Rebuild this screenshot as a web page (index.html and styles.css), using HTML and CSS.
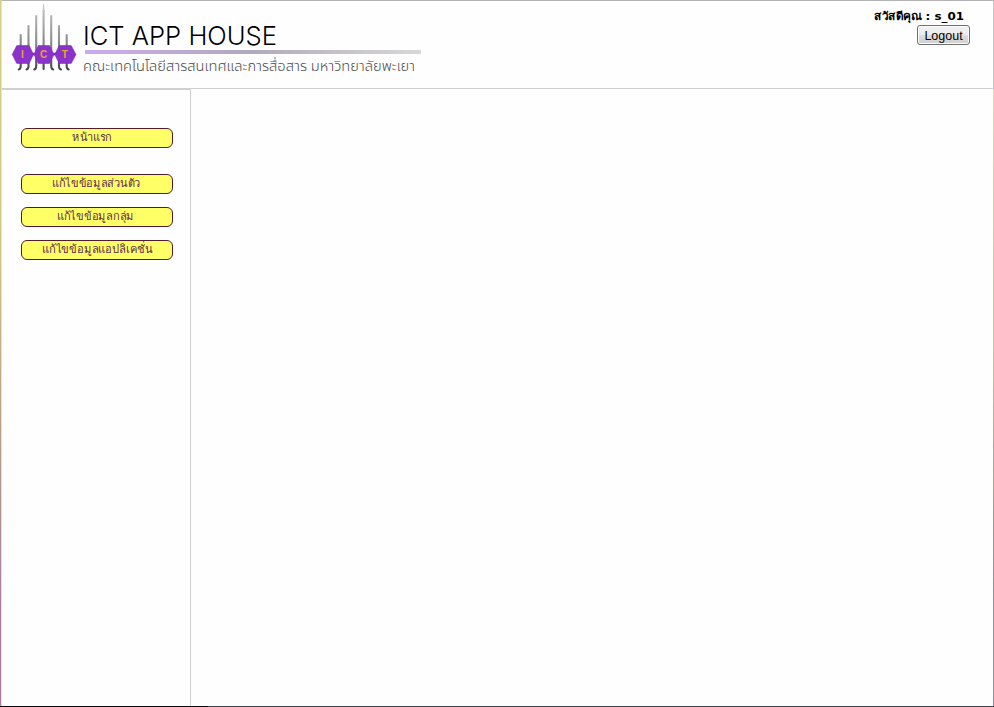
FILE: index.html
```html
<!DOCTYPE html>
<html lang="th">
<head>
<meta charset="utf-8">
<title>ICT APP HOUSE</title>
<link rel="stylesheet" href="styles.css">
</head>
<body>
<div class="frame">
  <div class="page">
    <header class="header">
      <svg class="logo" viewBox="0 0 430 86" width="430" height="86" role="img" aria-label="ICT APP HOUSE">
        <defs>
          <linearGradient id="spire" gradientUnits="userSpaceOnUse" x1="0" y1="4" x2="0" y2="70">
            <stop offset="0" stop-color="#c8c8c8"/><stop offset=".55" stop-color="#8c8c8c"/><stop offset="1" stop-color="#444"/>
          </linearGradient>
          <linearGradient id="rule" gradientUnits="userSpaceOnUse" x1="83" y1="0" x2="419" y2="0">
            <stop offset="0" stop-color="#cbabf0"/><stop offset=".5" stop-color="#b3a9bc"/><stop offset="1" stop-color="#d8d8d8"/>
          </linearGradient>
        </defs>
        <g fill="none" stroke="url(#spire)" stroke-width="2.1" stroke-linecap="round" stroke-linejoin="round">
          <path d="M18.700 34V65q0 3-2 3.500M26.500 25V65q0 3-2 3.500M34.200 15V65q0 3-2 3.500M49.200 15V65q0 3 2 3.500M57 25V65q0 3 2 3.500M64.700 34V65q0 3 2 3.500"/>
          <path d="M41.600 10V68"/>
        </g>
        <path d="M41.200 3h.8l.7 8h-2.200z" fill="#c4c4c4"/>
        <g fill="#8b32cb" stroke="#7423b0" stroke-width=".5">
          <path d="M30 52h4v2h-4zM51 52h3v2h-3z"/>
          <path d="M10.200 53.500L14.800 44.500h12.400l4.300 9-4.300 9H14.800z"/>
          <path d="M32 53.500L36.300 44.500h11.200l4.500 9-4.500 9H36.300z"/>
          <path d="M52.700 53.500L57.200 44.500h12l4.800 9-4.800 9h-12z"/>
        </g>
        <g class="badge">
          <text x="20.500" y="57">I</text><text x="41.500" y="57">C</text><text x="62.800" y="57">T</text>
        </g>
        <text class="brand" x="81" y="44" textLength="194" lengthAdjust="spacingAndGlyphs">ICT APP HOUSE</text>
        <path d="M83 49h336v4H83z" fill="url(#rule)"/>
        <text class="faculty" x="81" y="70" textLength="332" lengthAdjust="spacingAndGlyphs">คณะเทคโนโลยีสารสนเทศและการสื่อสาร มหาวิทยาลัยพะเยา</text>
      </svg>
      <div class="account">
        <svg class="greeting" width="92" height="20"><text x="0" y="15" textLength="90" lengthAdjust="spacingAndGlyphs">สวัสดีคุณ : s_01</text></svg>
        <button class="logout" type="button">Logout</button>
      </div>
    </header>
    <div class="body">
      <nav class="sidebar">
        <a class="item first"><svg width="148" height="18"><text x="49" y="12" textLength="40" lengthAdjust="spacingAndGlyphs">หน้าแรก</text></svg></a>
        <a class="item"><svg width="148" height="18"><text x="29" y="12" textLength="88" lengthAdjust="spacingAndGlyphs">แก้ไขข้อมูลส่วนตัว</text></svg></a>
        <a class="item"><svg width="148" height="18"><text x="34" y="12" textLength="77" lengthAdjust="spacingAndGlyphs">แก้ไขข้อมูลกลุ่ม</text></svg></a>
        <a class="item"><svg width="148" height="18"><text x="19" y="12" textLength="111" lengthAdjust="spacingAndGlyphs">แก้ไขข้อมูลแอปลิเคชั่น</text></svg></a>
      </nav>
      <main class="content"></main>
    </div>
  </div>
</div>
</body>
</html>
```

FILE: styles.css
```css
* { box-sizing: border-box; }
body {
  margin: 0;
  height: 707px;
  overflow: hidden;
  font-family: "Liberation Sans", "Noto Sans Thai", sans-serif;
}
.frame {
  height: 707px;
  padding: 0 1px 1px;
  background:
    linear-gradient(90deg, #07070f 0 208px, #36434f 208px) bottom / 100% 1px no-repeat,
    linear-gradient(#c8c8c8 0 89px, #e6df80 89px, #d5c67f 50%, #b9a083 65%, #aa7da0 85%) right / 1px 100% no-repeat,
    linear-gradient(#d9cf82 0, #d5c67f 35%, #b9a083 60%, #aa7da0 85%, #aa7da0 100%);
}
.page {
  display: flex;
  flex-direction: column;
  height: 706px;
  border-top: 1px solid #b3b3b3;
  border-left: 1px solid #e6e2d6;
  background: #fefefe;
}
.header {
  display: flex;
  justify-content: space-between;
  height: 88px;
  border-bottom: 1px solid #d0d0d0;
}
.logo, .greeting, .item svg { display: block; overflow: visible; }
.badge text {
  font: bold 10px "Liberation Sans", sans-serif;
  fill: #e3a536;
  text-anchor: middle;
}
.brand {
  font: 300 26px "Inter Light", Inter, Roboto, sans-serif;
  fill: #000;
}
.faculty {
  font: 300 14px "Noto Sans Thai", "Liberation Sans", sans-serif;
  fill: #4c4c4c;
}
.account {
  display: flex;
  flex-direction: column;
  align-items: flex-end;
  width: 120px;
  padding: 4px 23px 0 0;
}
.greeting { margin-right: 4px; }
.greeting text { font: bold 11px "DejaVu Sans", sans-serif; }
.logout {
  width: 53px;
  height: 20px;
  padding: 0;
  border: 1px solid #707070;
  border-radius: 3px;
  background: linear-gradient(#f2f2f2 0, #ebebeb 50%, #dddddd 50%, #cfcfcf 100%);
  box-shadow: inset 0 0 0 1px #fafafa;
  color: #000;
  font: 12.5px/20px "Liberation Sans", sans-serif;
}
.body { display: flex; flex: 1; }
.sidebar {
  width: 189px;
  padding: 38px 17px 0 19px;
  border-top: 1px solid #d0d0d0;
  border-right: 1px solid #cfcfcf;
}
.item {
  display: block;
  width: 152px;
  height: 20px;
  margin-bottom: 13px;
  padding-left: 1px;
  border: 1px solid #551a2b;
  border-radius: 6px;
  background: #ffff66;
}
.item.first { margin-bottom: 26px; }
.item text {
  font: 11.500px "DejaVu Sans", sans-serif;
  fill: #602c50;
}
.content { flex: 1; }
```
